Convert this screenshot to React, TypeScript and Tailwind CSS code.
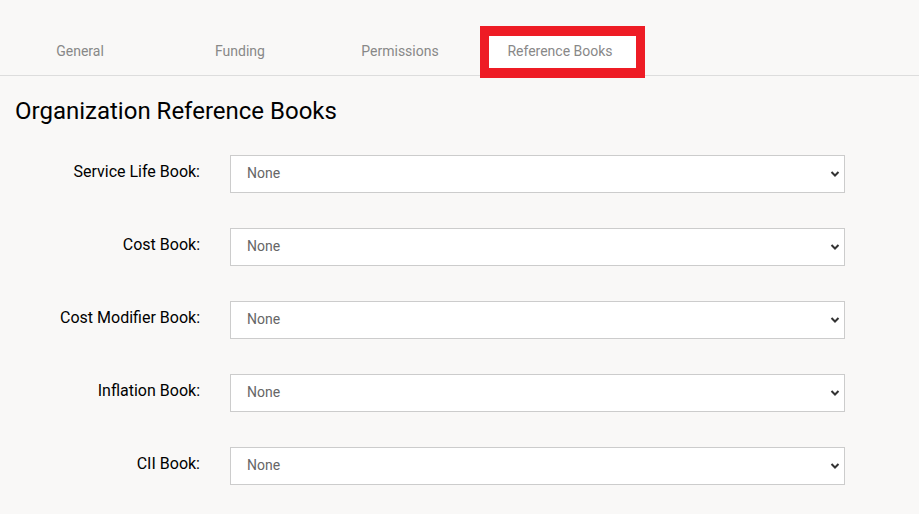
import { useState } from "react";

const tabs = ["General", "Funding", "Permissions", "Reference Books"];

const books = [
  "Service Life Book:",
  "Cost Book:",
  "Cost Modifier Book:",
  "Inflation Book:",
  "CII Book:",
];

function Chevron() {
  return (
    <svg
      width="10"
      height="7"
      viewBox="0 0 10 7"
      className="pointer-events-none absolute right-[5px] top-1/2 -translate-y-1/2"
    >
      <path d="M1.5 1.5 L5 5 L8.5 1.5" fill="none" stroke="#333" strokeWidth="2" />
    </svg>
  );
}

function BookRow({ label }: { label: string }) {
  const [value, setValue] = useState("none");
  return (
    <div className="flex items-start">
      <label className="w-[200px] shrink-0 pt-[6px] text-right text-[16px] font-normal leading-[22px] text-black">
        {label}
      </label>
      <div className="relative ml-[30px] w-[615px]">
        <select
          value={value}
          onChange={(e) => setValue(e.target.value)}
          className="block h-[38px] w-full appearance-none rounded-none border border-[#cccccc] bg-white pb-[2px] pl-[16px] text-[14px] text-[#666] outline-none"
        >
          <option value="none">None</option>
        </select>
        <Chevron />
      </div>
    </div>
  );
}

export default function App() {
  return (
    <div className="min-h-[514px] bg-[#f9f8f7] font-['Roboto',sans-serif]">
      {/* Tabs */}
      <div className="pt-[26px]">
        <div className="flex border-b border-[#dddddd]">
          {tabs.map((t) => (
            <div key={t} className="relative flex h-[49px] w-[160px] items-center justify-center pt-[2px]">
              {t === "Reference Books" && (
                <div className="absolute left-0 top-0 h-[52px] w-[165px] border-x-[9px] border-y-[10px] border-[#ee1c25] bg-white" />
              )}
              <span className="relative text-[14px] text-[#888]">{t}</span>
            </div>
          ))}
        </div>
      </div>

      {/* Heading */}
      <h1 className="mt-[20px] pl-[15px] text-[24px] font-normal leading-[30px] text-black">
        Organization Reference Books
      </h1>

      {/* Selects */}
      <div className="mt-[29px] flex flex-col gap-[35px]">
        {books.map((b) => (
          <BookRow key={b} label={b} />
        ))}
      </div>
    </div>
  );
}
